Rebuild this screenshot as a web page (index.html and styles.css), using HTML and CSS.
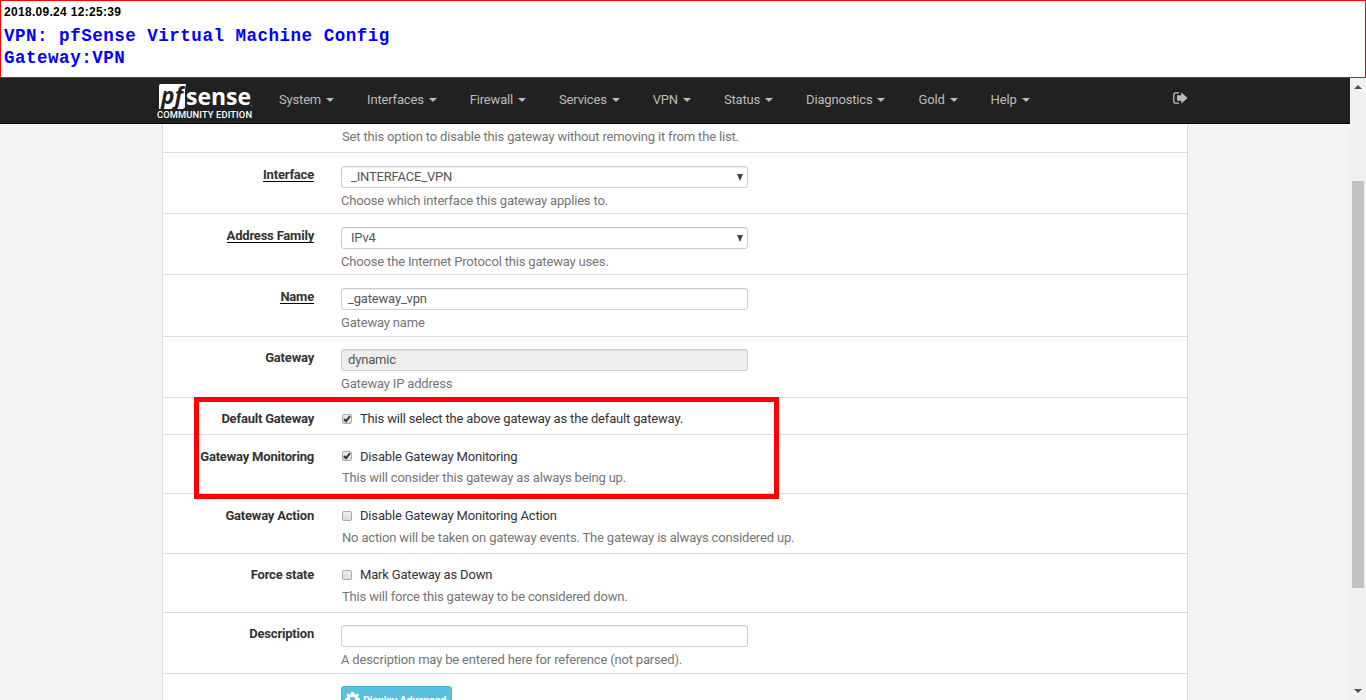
FILE: index.html
```
<!DOCTYPE html>
<html lang="en">
<head>
<meta charset="utf-8">
<title>VPN: pfSense Virtual Machine Config</title>
<link rel="stylesheet" href="styles.css">
</head>
<body>
<header class="caption">
  <div class="stamp">2018.09.24 12:25:39</div>
  <div class="title">VPN: pfSense Virtual Machine Config<br>Gateway:VPN</div>
</header>
<div class="window">
  <div class="page">
    <nav class="navbar">
      <svg class="logo" width="100" height="45" viewBox="0 0 100 45">
        <path d="M6 6H31L30 12V28Q30 31 27 31H4V8Q4 6 6 6Z" fill="#fff"/>
        <text class="logo-pf" x="6" y="26" textLength="22" lengthAdjust="spacingAndGlyphs">pf</text>
        <text class="logo-sense" x="31" y="27" textLength="65" lengthAdjust="spacingAndGlyphs">sense</text>
        <rect x="96" y="27" width="1" height="1" fill="#aaa"/>
        <text class="logo-edition" x="2" y="40" textLength="95">COMMUNITY EDITION</text>
      </svg>
      <ul class="menu">
        <li>System<i class="caret"></i></li>
        <li>Interfaces<i class="caret"></i></li>
        <li>Firewall<i class="caret"></i></li>
        <li>Services<i class="caret"></i></li>
        <li>VPN<i class="caret"></i></li>
        <li>Status<i class="caret"></i></li>
        <li>Diagnostics<i class="caret"></i></li>
        <li>Gold<i class="caret"></i></li>
        <li>Help<i class="caret"></i></li>
      </ul>
      <svg class="logout" width="15" height="12" viewBox="0 0 15 12">
        <path d="M6 .8H3Q.8 .8 .8 3V9Q.8 11.2 3 11.2H6" fill="none" stroke="#bbb" stroke-width="1.3"/>
        <path d="M4 3.2H8.3V.3L14.6 6L8.3 11.7V8.8H4Z" fill="#bbb"/>
      </svg>
    </nav>
    <main class="panel">
      <div class="row row-first"><div></div><div class="field"><p class="help indent">Set this option to disable this gateway without removing it from the list.</p></div></div>
      <div class="row"><div class="label"><span class="required">Interface</span></div><div class="field"><div class="control select">_INTERFACE_VPN<i class="arrow"></i></div><p class="help">Choose which interface this gateway applies to.</p></div></div>
      <div class="row"><div class="label"><span class="required">Address Family</span></div><div class="field"><div class="control select">IPv4<i class="arrow"></i></div><p class="help">Choose the Internet Protocol this gateway uses.</p></div></div>
      <div class="row row-name"><div class="label"><span class="required">Name</span></div><div class="field"><div class="control">_gateway_vpn</div><p class="help">Gateway name</p></div></div>
      <div class="row row-tight"><div class="label">Gateway</div><div class="field"><div class="control disabled">dynamic</div><p class="help">Gateway IP address</p></div></div>
      <div class="row row-tight row-default"><div class="label">Default Gateway</div><div class="field"><div class="check"><i class="box"><svg width="8" height="8" viewBox="0 0 8 8"><path d="M1 4L3 6.3L7 1.2" fill="none" stroke="#333" stroke-width="2"/></svg></i>This will select the above gateway as the default gateway.</div></div></div>
      <div class="row row-monitor"><div class="label">Gateway Monitoring</div><div class="field"><div class="check"><i class="box"><svg width="8" height="8" viewBox="0 0 8 8"><path d="M1 4L3 6.3L7 1.2" fill="none" stroke="#333" stroke-width="2"/></svg></i>Disable Gateway Monitoring</div><p class="help indent">This will consider this gateway as always being up.</p></div></div>
      <div class="row row-action"><div class="label">Gateway Action</div><div class="field"><div class="check"><i class="box"></i>Disable Gateway Monitoring Action</div><p class="help indent">No action will be taken on gateway events. The gateway is always considered up.</p></div></div>
      <div class="row row-tight row-force"><div class="label">Force state</div><div class="field"><div class="check"><i class="box"></i>Mark Gateway as Down</div><p class="help indent">This will force this gateway to be considered down.</p></div></div>
      <div class="row row-tight"><div class="label">Description</div><div class="field"><div class="control"></div><p class="help">A description may be entered here for reference (not parsed).</p></div></div>
      <div class="row row-advanced"><div></div><div class="field"><div class="button"><svg width="15" height="15" viewBox="0 0 16 16"><path fill="#fff" fill-rule="evenodd" d="M6.5 0H9.5L10 2.2L11.4 2.8L13.3 1.5L15 3.3L13.6 5.2L14 6.3L16 6.7V9.3L14 9.7L13.3 11.2L14.5 13L12.8 14.7L11 13.5L9.7 14L9.3 16H6.7L6.2 14L4.8 13.5L3 14.7L1.2 13L2.5 11L2 9.8L0 9.3V6.7L2 6.2L2.6 4.8L1.3 3L3 1.3L5 2.6L6 2.2ZM8 5A3 3 0 1 0 8 11A3 3 0 1 0 8 5Z"/></svg><span>Display Advanced</span></div></div></div>
    </main>
  </div>
  <aside class="scrollbar">
    <svg class="up" width="8" height="4" viewBox="0 0 8 4"><path d="M0 4L4 0L8 4Z" fill="#505050"/></svg>
    <div class="thumb"></div>
    <svg class="down" width="8" height="4" viewBox="0 0 8 4"><path d="M0 0L4 4L8 0Z" fill="#505050"/></svg>
  </aside>
</div>
<div class="highlight"></div>
</body>
</html>
```
FILE: styles.css
```
* { box-sizing: border-box; }
html, body { height: 700px; overflow: hidden; }
body { margin: 0; background: #f4f4f4; font: 13px/18px Roboto, sans-serif; letter-spacing: -0.172px; color: #333; }
.caption { height: 78px; border: 1px solid #f00; background: #fff; padding: 3px 3px 0; letter-spacing: 0; }
.stamp { height: 16px; font: bold 12px/17px "Liberation Sans", sans-serif; color: #000; letter-spacing: 0.3px; }
.title { margin-top: 5px; font: bold 17.5px/22px "Liberation Mono", monospace; letter-spacing: 0.52px; color: #00f; }
.window { display: flex; height: 622px; }
.page { width: 1350px; }
.navbar { height: 46px; display: flex; background: #212121; border-bottom: 1px solid #000; padding-left: 155px; }
.logo { flex: none; letter-spacing: 0; }
.logo-pf { font: italic bold 24px "Open Sans", sans-serif; fill: #212121; }
.logo-sense { font: bold 24px "Open Sans", sans-serif; fill: #fff; }
.logo-edition { font: 500 9.3px Roboto, sans-serif; fill: #fff; }
.menu { display: flex; gap: 33px; width: 918px; margin: 0; padding: 13px 0 0 24px; list-style: none; color: #bbb; }
.menu li { display: flex; align-items: flex-start; white-space: nowrap; }
.caret { width: 8px; border: 4px solid transparent; border-top-color: #bbb; border-bottom: 0; margin: 7px 0 0 5px; }
.logout { flex: none; margin-top: 14px; }
.panel { width: 1026px; height: 576px; margin-left: 162px; background: #fff; border: solid #ddd; border-width: 0 1px; overflow: hidden; }
.row { display: grid; grid-template-columns: 151px 1fr; column-gap: 27px; height: 61px; padding-top: 13px; border-bottom: 1px solid #ddd; }
.row-first { height: 29px; padding-top: 4px; }
.row-name { height: 62px; }
.row-tight { padding-top: 12px; }
.row-default { height: 37px; }
.row-monitor { height: 59px; }
.row-action { height: 60px; }
.row-force { height: 59px; }
.row-advanced { height: 60px; padding-top: 12px; border: 0; }
.label { display: flex; justify-content: flex-end; font-weight: 700; letter-spacing: -0.2px; white-space: nowrap; }
.required { height: 16px; border-bottom: 1px solid #000; }
.control { position: relative; width: 407px; height: 22px; padding: 1px 6px; border: 1px solid #ccc; border-radius: 3px; color: #555; box-shadow: inset 0 1px 1px rgba(0,0,0,.075); }
.select { padding-left: 9px; }
.disabled { background: #eee; }
.arrow { position: absolute; right: 4px; top: 7px; border: 3px solid transparent; border-top: 7px solid #444; border-bottom: 0; }
.help { margin: 4px 0 0; color: #757575; white-space: nowrap; }
.row-first .help { margin-top: 0; }
.indent { padding-left: 1px; }
.check { display: flex; white-space: nowrap; }
.row-monitor .help { margin-top: 3px; }
.box { flex: none; width: 10px; height: 10px; margin: 4px 8px 0 1px; border: 1px solid #aaa; border-radius: 2px; background: linear-gradient(#eee, #ddd); }
.row-monitor .box { margin-top: 3px; }
.row-tight .box { margin-top: 4px; }
.box svg { display: block; }
.button { display: flex; width: 111px; height: 30px; padding: 5px 3px; gap: 3px; border: 1px solid #46b8da; border-radius: 3px; background: #5bc0de; color: #fff; font: bold 11px/18px Roboto, sans-serif; letter-spacing: -0.3px; white-space: nowrap; }
.button svg { flex: none; }
.scrollbar { display: flex; flex-direction: column; align-items: center; width: 16px; background: #f1f1f1; }
.up { margin-top: 7px; }
.thumb { width: 12px; height: 407px; margin-top: 92px; background: #c1c1c1; }
.down { margin-top: 101px; }
.highlight { position: absolute; left: 194px; top: 397px; width: 585px; height: 102px; border: 5px solid #f00; }
```
